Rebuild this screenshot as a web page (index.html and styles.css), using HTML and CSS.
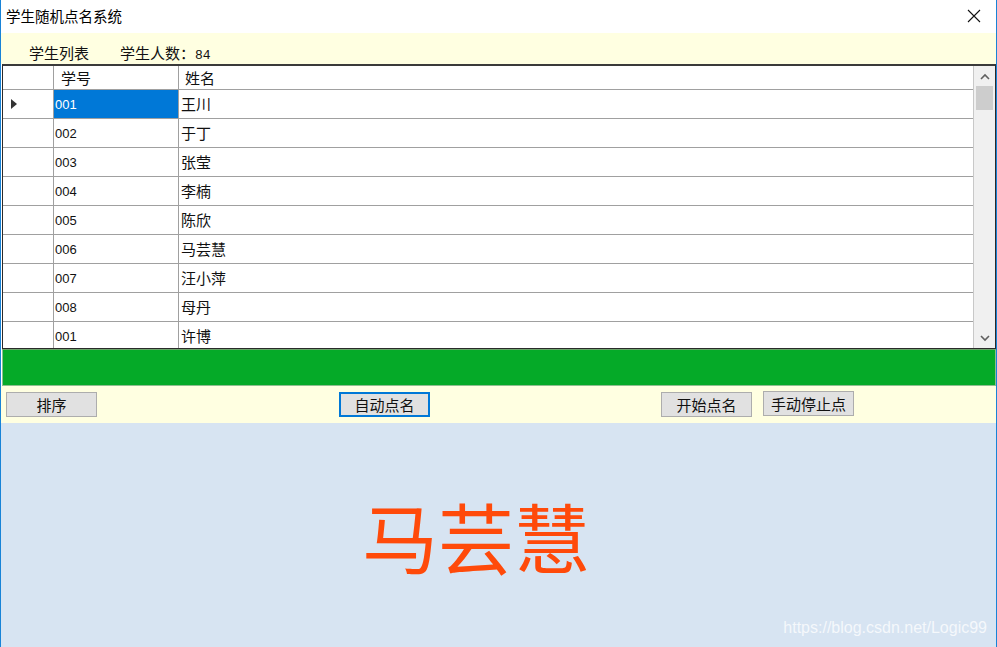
FILE: index.html
```html
<!DOCTYPE html>
<html lang="zh-CN">
<head>
<meta charset="utf-8">
<title>学生随机点名系统</title>
<link rel="stylesheet" href="styles.css">
</head>
<body>
<div class="window">
  <div class="titlebar">
    <span class="title">学生随机点名系统</span>
    <svg class="close" width="14" height="14" viewBox="0 0 14 14"><path d="M1 1L13 13M13 1L1 13" stroke="#111" stroke-width="1.1" fill="none"/></svg>
  </div>
  <div class="toolbar">
    <span class="tb-label">学生列表</span>
    <span class="tb-count">学生人数：<span class="num">84</span></span>
  </div>
  <div class="grid">
    <div class="table">
      <div class="row head">
        <div class="c-rh"></div>
        <div class="c-id">学号</div>
        <div class="c-name">姓名</div>
      </div>
      <div class="row">
        <div class="c-rh"><svg width="7" height="10" viewBox="0 0 7 10"><path d="M0 0L6 5L0 10Z" fill="#333"/></svg></div>
        <div class="c-id sel">001</div>
        <div class="c-name">王川</div>
      </div>
      <div class="row"><div class="c-rh"></div><div class="c-id">002</div><div class="c-name">于丁</div></div>
      <div class="row"><div class="c-rh"></div><div class="c-id">003</div><div class="c-name">张莹</div></div>
      <div class="row"><div class="c-rh"></div><div class="c-id">004</div><div class="c-name">李楠</div></div>
      <div class="row"><div class="c-rh"></div><div class="c-id">005</div><div class="c-name">陈欣</div></div>
      <div class="row"><div class="c-rh"></div><div class="c-id">006</div><div class="c-name">马芸慧</div></div>
      <div class="row"><div class="c-rh"></div><div class="c-id">007</div><div class="c-name">汪小萍</div></div>
      <div class="row"><div class="c-rh"></div><div class="c-id">008</div><div class="c-name">母丹</div></div>
      <div class="row"><div class="c-rh"></div><div class="c-id">001</div><div class="c-name">许博</div></div>
    </div>
    <div class="scrollbar">
      <div class="sb-btn"><svg width="10" height="7" viewBox="0 0 10 7"><path d="M1 6L5 2L9 6" stroke="#606060" stroke-width="1.6" fill="none"/></svg></div>
      <div class="sb-track"><div class="sb-thumb"></div></div>
      <div class="sb-btn"><svg width="10" height="7" viewBox="0 0 10 7"><path d="M1 1L5 5L9 1" stroke="#606060" stroke-width="1.6" fill="none"/></svg></div>
    </div>
  </div>
  <div class="greenbar"></div>
  <div class="btnbar">
    <button class="btn b-sort">排序</button>
    <button class="btn b-auto">自动点名</button>
    <button class="btn b-start">开始点名</button>
    <button class="btn b-stop">手动停止点</button>
  </div>
  <div class="main">
    <div class="picked">马芸慧</div>
    <div class="watermark">https://blog.csdn.net/Logic99</div>
  </div>
</div>
</body>
</html>
```
FILE: styles.css
```css
* { box-sizing: border-box; }
html, body { margin: 0; padding: 0; }
body {
  width: 997px;
  height: 647px;
  overflow: hidden;
  font-family: "Noto Sans CJK SC", "Liberation Sans", sans-serif;
  color: #111;
}
.window {
  width: 997px;
  height: 647px;
  border-left: 1px solid #1883d7;
  border-right: 1px solid #1883d7;
  display: flex;
  flex-direction: column;
  background: #fff;
}
.titlebar {
  height: 33px;
  display: flex;
  align-items: center;
  justify-content: space-between;
  padding: 0 15px 0 5px;
  background: #fff;
}
.title { font-size: 14.5px; line-height: 1; color: #000; }
.close { display: block; margin-top: -1px; }
.toolbar {
  height: 31px;
  background: #ffffe1;
  display: flex;
  align-items: flex-end;
  padding: 0 0 1px 28px;
  font-size: 15px;
  line-height: 20px;
}
.tb-label, .tb-count { display: block; height: 20px; line-height: 20px; }
.tb-count { margin-left: 31px; }
.tb-count .num { font-family: "Liberation Mono", monospace; font-size: 13px; line-height: 1; }
.grid {
  height: 285px;
  margin-left: 1px;
  border: 1px solid #2a2a2a;
  border-top: 2px solid #3a3a3a;
  display: flex;
  background: #fff;
  overflow: hidden;
}
.table { flex: 1; overflow: hidden; }
.row {
  display: flex;
  height: 29px;
  border-bottom: 1px solid #a0a0a0;
}
.row.head { height: 24px; border-bottom: 1px solid #a0a0a0; }
.c-rh {
  width: 51px;
  border-right: 1px solid #a0a0a0;
  display: flex;
  align-items: center;
  padding-left: 8px;
  background: #fff;
}
.c-id {
  width: 125px;
  border-right: 1px solid #a0a0a0;
  font-family: "Liberation Sans", sans-serif;
  font-size: 13px;
  display: flex;
  align-items: center;
  padding-left: 1px;
}
.c-name {
  flex: 1;
  font-size: 15px;
  display: flex;
  align-items: center;
  padding-left: 2px;
  padding-bottom: 1px;
}
.head .c-id, .head .c-name {
  font-family: "Noto Sans CJK SC", sans-serif;
  font-size: 15px;
  align-items: center;
  padding-top: 0;
  padding-bottom: 0;
}
.head .c-id { padding-left: 7px; }
.head .c-name { padding-left: 6px; }
.c-id.sel { background: #0078d7; color: #fff; }
.scrollbar {
  width: 22px;
  border-left: 1px solid #c8c8c8;
  background: #f0f0f0;
  display: flex;
  flex-direction: column;
}
.sb-btn {
  height: 20px;
  display: flex;
  align-items: center;
  justify-content: center;
}
.sb-track { flex: 1; padding: 0 2px; }
.sb-thumb { height: 24px; background: #cdcdcd; }
.greenbar {
  height: 37px;
  margin-left: 1px;
  background: #05aa28;
  border: 1px solid #8fbf8f;
  border-top: 1px solid #6aa46a;
}
.btnbar {
  height: 37px;
  background: #ffffe1;
  display: flex;
  align-items: center;
  padding-left: 5px;
}
.btn {
  width: 91px;
  height: 25px;
  background: #e1e1e1;
  border: 1px solid #adadad;
  font-family: "Noto Sans CJK SC", sans-serif;
  font-size: 15px;
  line-height: 1;
  color: #111;
  padding: 0 0 1px 0;
  margin: 0;
}
.b-auto { margin-left: 242px; border: 2px solid #0078d7; }
.b-start { margin-left: 231px; }
.b-stop { margin-left: 11px; margin-top: -2px; }
.main {
  flex: 1;
  background: #d7e4f2;
  position: relative;
}
.picked {
  margin: 74px 0 0 361px;
  font-size: 76px;
  line-height: 76px;
  color: #ff4a0a;
  font-family: "Noto Sans CJK SC", sans-serif;
  font-weight: 400;
}
.watermark {
  position: absolute;
  right: 9px;
  bottom: 10px;
  font-family: "Liberation Sans", sans-serif;
  font-size: 16px;
  color: rgba(255, 255, 255, 0.75);
}
```
